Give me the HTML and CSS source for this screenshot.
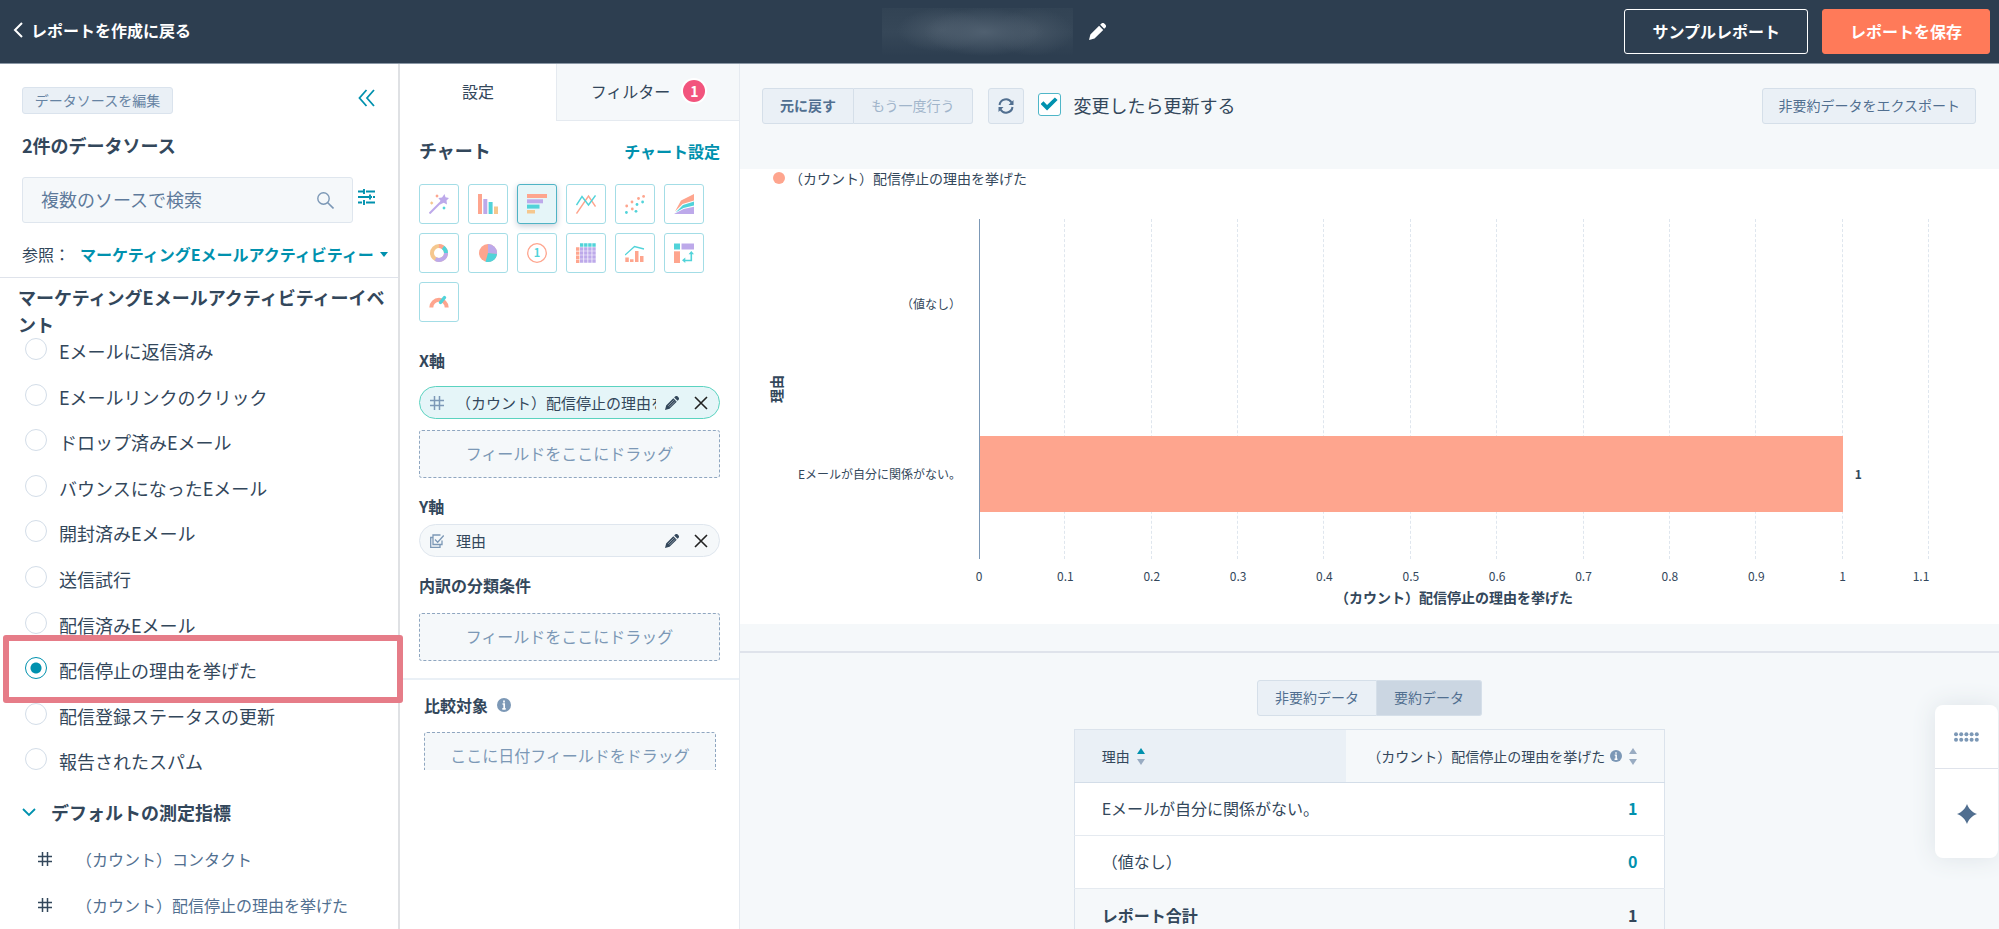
FILE: index.html
```html
<!DOCTYPE html>
<html lang="ja">
<head>
	<meta charset="UTF-8">
	<title>レポートビルダー</title>
	<link rel="stylesheet" href="styles.css">
</head>
<body>
	<svg class="defs" aria-hidden="true">
		<symbol id="pencil" viewBox="0 0 16 16">
			<path d="M0 16l1.300-5.200L9.500 2.600l3.900 3.900-8.200 8.200zM10.500 1.700l1-1a2.200 2.200 0 0 1 3.100 0l.7.700a2.200 2.200 0 0 1 0 3.100l-1 1z" fill="currentColor"/>
			<path d="M3.500 11.300l6.500-6.500M5 12.700l6.500-6.500" class="groove"/>
		</symbol>
		<symbol id="close" viewBox="0 0 14 14">
			<path d="M1 1l12 12M13 1L1 13" fill="none" stroke="#222" stroke-width="1.600"/>
		</symbol>
		<symbol id="hash" viewBox="0 0 14 14">
			<path d="M4.500 0v14M9.500 0v14M0 4.500h14M0 9.500h14" fill="none" stroke="currentColor" stroke-width="1.500"/>
		</symbol>
		<symbol id="info" viewBox="0 0 14 14">
			<circle cx="7" cy="7" r="7" fill="#7c98b6"/>
			<path d="M7 2.500v2M5.500 6h1.700v4.500M5.300 10.800h3.400" fill="none" stroke="#fff" stroke-width="1.700"/>
		</symbol>
	</svg>

	<header class="header">
		<a href="#" class="back">
			<svg width="10" height="16" viewBox="0 0 10 16"><path d="M9 1L2 8l7 7" fill="none" stroke="#fff" stroke-width="2"/></svg>
			レポートを作成に戻る
		</a>
		<div class="title">
			<span class="title-name"></span>
			<button class="icon-btn" aria-label="名前を編集"><svg class="title-pencil"><use href="#pencil"/></svg></button>
		</div>
		<div class="actions">
			<button class="btn-top">サンプルレポート</button>
			<button class="btn-top save">レポートを保存</button>
		</div>
	</header>

	<div class="app">
		<aside class="sidebar">
			<div class="source">
				<div class="source-top">
					<button class="btn-edit">データソースを編集</button>
					<button class="icon-btn" aria-label="閉じる">
						<svg width="17" height="20" viewBox="0 0 17 20"><path d="M8.500 3L1.500 11l7 8M16 3L9 11l7 8" fill="none" stroke="#0091ae" stroke-width="1.800"/></svg>
					</button>
				</div>
				<h2>2件のデータソース</h2>
				<div class="search-row">
					<div class="search">
						<input type="text" placeholder="複数のソースで検索" aria-label="検索">
						<svg width="17" height="17" viewBox="0 0 17 17"><circle cx="6.500" cy="6.500" r="5.700" fill="none" stroke="#7c98b6" stroke-width="1.400"/><path d="M10.500 10.500l6 6" stroke="#7c98b6" stroke-width="1.600"/></svg>
					</div>
					<button class="icon-btn" aria-label="絞り込み">
						<svg width="17" height="16" viewBox="0 0 17 16"><path d="M0 2.500h6M8 2.500h9M0 8h11M13 8h1M15 8h2M0 13.500h4M8 13.500h9M6 0v5M12 5.500v5M6 11v5" fill="none" stroke="#0091ae" stroke-width="1.900"/></svg>
					</button>
				</div>
				<div class="browse">
					<label for="browse">参照：</label>
					<select id="browse"><option>マーケティングEメールアクティビティー</option></select>
					<span class="caret"></span>
				</div>
			</div>
			<h2 class="events-title">マーケティングEメールアクティビティーイベント</h2>
			<ul class="events">
				<li><input type="radio" name="event" id="e1"><label for="e1">Eメールに返信済み</label></li>
				<li><input type="radio" name="event" id="e2"><label for="e2">Eメールリンクのクリック</label></li>
				<li><input type="radio" name="event" id="e3"><label for="e3">ドロップ済みEメール</label></li>
				<li><input type="radio" name="event" id="e4"><label for="e4">バウンスになったEメール</label></li>
				<li><input type="radio" name="event" id="e5"><label for="e5">開封済みEメール</label></li>
				<li><input type="radio" name="event" id="e6"><label for="e6">送信試行</label></li>
				<li><input type="radio" name="event" id="e7"><label for="e7">配信済みEメール</label></li>
				<li class="marked"><input type="radio" name="event" id="e8" checked><label for="e8">配信停止の理由を挙げた</label></li>
				<li><input type="radio" name="event" id="e9"><label for="e9">配信登録ステータスの更新</label></li>
				<li><input type="radio" name="event" id="e10"><label for="e10">報告されたスパム</label></li>
			</ul>
			<h2 class="metrics-title">
				<svg width="14" height="9" viewBox="0 0 14 9"><path d="M1 1l6 6 6-6" fill="none" stroke="#0091ae" stroke-width="1.800"/></svg>
				デフォルトの測定指標
			</h2>
			<ul class="metrics">
				<li><svg class="i14"><use href="#hash"/></svg><span>（カウント）コンタクト</span></li>
				<li><svg class="i14"><use href="#hash"/></svg><span>（カウント）配信停止の理由を挙げた</span></li>
			</ul>
		</aside>

		<section class="config">
			<nav class="tabs">
				<button class="tab active">設定</button>
				<button class="tab">フィルター<span class="badge">1</span></button>
			</nav>
			<div class="config-body">
				<div class="inner">
					<div class="chart-head">
						<h2>チャート</h2>
						<a href="#">チャート設定</a>
					</div>
					<div class="types">
						<button aria-label="自動"><svg viewBox="0 0 20 20"><path d="M.5 19.500L13 7" stroke="#bda9ea" stroke-width="2"/><path d="M15.500 0l1 3.300L20 4l-2.500 2.500.5 4-3.300-1.700L11 10.500l.5-3.700L9.300 4l3.700-.5z" fill="#bda9ea"/><path d="M8 .3L9.700 2 8 3.700 6.300 2z" fill="#fea58e"/><path d="M2.700 7.300L4.400 9l-1.700 1.700L1 9z" fill="#f5c78e"/><path d="M15 12.300l1.700 1.700-1.700 1.700-1.700-1.700z" fill="#51d3d9"/></svg></button>
						<button aria-label="縦棒"><svg viewBox="0 0 20 20"><path d="M0 0h4v20H0z" fill="#fea58e"/><path d="M5.300 5h4v15h-4z" fill="#bda9ea"/><path d="M10.600 8h4v12h-4z" fill="#51d3d9"/><path d="M16 12.500h4V20h-4z" fill="#f5c78e"/></svg></button>
						<button aria-label="横棒" class="on"><svg viewBox="0 0 20 20"><path d="M0 0h20v4H0z" fill="#fea58e"/><path d="M0 5.300h16v4H0z" fill="#bda9ea"/><path d="M0 10.600h12.500v4H0z" fill="#51d3d9"/><path d="M0 16h8v3.500H0z" fill="#f5c78e"/></svg></button>
						<button aria-label="折れ線"><svg viewBox="0 0 20 20" fill="none" stroke-width="1.400"><path d="M.5 19.500l12-17.500 7 10.500" stroke="#fea58e"/><path d="M.5 11L6 2.500l6.500 8.500 7-9.500" stroke="#51d3d9"/></svg></button>
						<button aria-label="散布図"><svg viewBox="0 0 20 20"><g fill="#fea58e"><circle cx="1.700" cy="12" r="1.400"/><circle cx="7" cy="8" r="1.400"/><circle cx="7.300" cy="15" r="1.400"/><circle cx="13.500" cy="4.500" r="1.400"/><circle cx="18.600" cy="2.400" r="1.400"/></g><g fill="#51d3d9"><circle cx="1.400" cy="18.500" r="1.400"/><circle cx="11" cy="17.300" r="1.400"/><circle cx="12" cy="10.500" r="1.400"/><circle cx="17.600" cy="8" r="1.400"/></g></svg></button>
						<button aria-label="面"><svg viewBox="0 0 20 20"><path d="M1 17.500L7 6.500 20 0v6.500L8.500 10z" fill="#fea58e"/><path d="M1.500 18.500L9 11l11-3.500v4L9.500 14z" fill="#51d3d9"/><path d="M0 20L9.500 15 20 12.800V20z" fill="#bda9ea"/></svg></button>
						<button aria-label="ドーナツ"><svg viewBox="0 0 20 20" fill="none" stroke-width="4"><circle cx="10" cy="10" r="7" stroke="#f5c78e"/><path d="M10 3a7 7 0 0 1 4 1.300" stroke="#fea58e"/><path d="M14 4.300A7 7 0 0 1 17 10" stroke="#51d3d9"/><path d="M17 10a7 7 0 0 1-10.500 6" stroke="#bda9ea"/></svg></button>
						<button aria-label="円"><svg viewBox="0 0 20 20"><circle cx="10" cy="10" r="9" fill="#fea58e"/><path d="M10 10V1a9 9 0 0 1 9 10z" fill="#bda9ea"/><path d="M10 10l9 1a9 9 0 0 1-11.500 7.700z" fill="#51d3d9"/></svg></button>
						<button aria-label="数値"><svg viewBox="0 0 20 20"><circle cx="10" cy="10" r="9.300" fill="none" stroke="#fea58e" stroke-width="1.300"/><text x="10" y="14" text-anchor="middle" class="num">1</text></svg></button>
						<button aria-label="表"><svg viewBox="0 0 20 20" fill="none" stroke-width="3.400" stroke-dasharray="3.400 .7"><path d="M4 2h16" stroke="#51d3d9"/><path d="M4 6h16M4 10h16M4 14h16M4 18h16" stroke="#bda9ea"/><path d="M1.700 4.300V20" stroke="#fea58e"/></svg></button>
						<button aria-label="複合"><svg viewBox="0 0 20 20"><path d="M0 12l9.500-8.500L19 6" fill="none" stroke="#51d3d9" stroke-width="1.300"/><path d="M.3 14.500h3.500V19H.3zM5 16.300h3.500V19H5zM10 8h3.500v11H10zM15 13h3.500v6H15z" fill="#fea58e"/></svg></button>
						<button aria-label="ピボット"><svg viewBox="0 0 20 20"><path d="M0 .5h6v6H0z" fill="#51d3d9"/><path d="M7.500.5H20v6H7.500z" fill="#bda9ea"/><path d="M0 8.300h6V20H0z" fill="#fea58e"/><path d="M17.300 10v7.500H10" fill="none" stroke="#51d3d9" stroke-width="1.600"/><path d="M17.300 8l2.700 3.300h-5.400zM8 17.300l3.300-2.700V20z" fill="#51d3d9"/></svg></button>
						<button aria-label="ゲージ"><svg viewBox="0 0 20 20" fill="none" stroke-width="4"><path d="M2.300 15.500a7.700 7.700 0 0 1 15.400 0" stroke="#fea58e"/><path d="M11.500 10.500l4-5" stroke="#51d3d9" stroke-width="3.400" stroke-linecap="round"/></svg></button>
					</div>

					<h3 class="axis-x">X軸</h3>
					<div class="pill green">
						<svg class="i14"><use href="#hash"/></svg>
						<span>（カウント）配信停止の理由を挙げた</span>
						<button class="icon-btn" aria-label="編集"><svg class="i14"><use href="#pencil"/></svg></button>
						<button class="icon-btn" aria-label="削除"><svg class="i14"><use href="#close"/></svg></button>
					</div>
					<div class="drop">フィールドをここにドラッグ</div>

					<h3 class="axis-y">Y軸</h3>
					<div class="pill">
						<svg class="i14" viewBox="0 0 14 14" fill="none" stroke="currentColor" stroke-width="1.300"><path d="M10.500 1H3v9.500h9V6.500M2.500 3.500H.7v9.800H10v-2.500M5 5.500l2.700 2.700L13.700 1.500"/></svg>
						<span>理由</span>
						<button class="icon-btn" aria-label="編集"><svg class="i14"><use href="#pencil"/></svg></button>
						<button class="icon-btn" aria-label="削除"><svg class="i14"><use href="#close"/></svg></button>
					</div>

					<h3 class="breakdown">内訳の分類条件</h3>
					<div class="drop">フィールドをここにドラッグ</div>
				</div>
				<div class="compare">
					<h3>比較対象 <svg class="i14"><use href="#info"/></svg></h3>
					<div class="drop">ここに日付フィールドをドラッグ</div>
				</div>
			</div>
		</section>

		<main class="main">
			<div class="toolbar">
				<div class="group">
					<button class="btn undo">元に戻す</button>
					<button class="btn" disabled>もう一度行う</button>
				</div>
				<button class="btn refresh" aria-label="更新">
					<svg width="16" height="16" viewBox="0 0 16 16"><path d="M1.500 7A6.500 6.500 0 0 1 13.500 4.500M14.500 9A6.500 6.500 0 0 1 2.500 11.500" fill="none" stroke="#516f90" stroke-width="2"/><path d="M15.500 2v5h-5zM.5 14V9h5z" fill="#516f90"/></svg>
				</button>
				<input type="checkbox" id="auto" checked>
				<label for="auto">変更したら更新する</label>
				<button class="btn export">非要約データをエクスポート</button>
			</div>

			<div class="chart">
				<div class="legend"><i></i>（カウント）配信停止の理由を挙げた</div>
				<div class="ytitle">理由</div>
				<div class="ylabels">
					<span>（値なし）</span>
					<span>Eメールが自分に関係がない。</span>
				</div>
				<div class="grid"><i></i><i></i><i></i><i></i><i></i><i></i><i></i><i></i><i></i><i></i><i></i></div>
				<div class="bars">
					<div class="row"><div class="bar" style="width: 0%"></div></div>
					<div class="row"><div class="bar" style="width: 90.9%"></div><b>1</b></div>
				</div>
				<div class="xaxis">
					<div class="ticks">
						<span>0</span><span>0.1</span><span>0.2</span><span>0.3</span><span>0.4</span><span>0.5</span><span>0.6</span><span>0.7</span><span>0.8</span><span>0.9</span><span>1</span><span>1.1</span>
					</div>
					<div class="xtitle">（カウント）配信停止の理由を挙げた</div>
				</div>
			</div>

			<div class="data">
				<div class="group">
					<button class="btn">非要約データ</button>
					<button class="btn selected">要約データ</button>
				</div>
				<table>
					<thead>
						<tr>
							<th class="sorted"><div>理由<span class="sort asc"></span></div></th>
							<th><div>（カウント）配信停止の理由を挙げた<svg class="i12"><use href="#info"/></svg><span class="sort"></span></div></th>
						</tr>
					</thead>
					<tbody>
						<tr><td>Eメールが自分に関係がない。</td><td><a href="#">1</a></td></tr>
						<tr><td>（値なし）</td><td><a href="#">0</a></td></tr>
					</tbody>
					<tfoot>
						<tr><td>レポート合計</td><td>1</td></tr>
					</tfoot>
				</table>
			</div>
		</main>
	</div>

	<div class="float">
		<button aria-label="キーボード">
			<svg width="25" height="10" viewBox="0 0 25 10" fill="#7c98b6"><circle cx="2" cy="2.300" r="2"/><circle cx="7.200" cy="2.300" r="2"/><circle cx="12.400" cy="2.300" r="2"/><circle cx="17.600" cy="2.300" r="2"/><circle cx="22.800" cy="2.300" r="2"/><circle cx="2" cy="7.700" r="2"/><circle cx="7.200" cy="7.700" r="2"/><circle cx="12.400" cy="7.700" r="2"/><circle cx="17.600" cy="7.700" r="2"/><circle cx="22.800" cy="7.700" r="2"/></svg>
		</button>
		<button class="ai" aria-label="アシスタント">
			<svg width="20" height="20" viewBox="0 0 20 20"><path d="M10 0c1.500 4 4.500 8 10 10-5.500 2-8.500 6-10 10-1.500-4-4.500-8-10-10C5.500 8 8.500 4 10 0z" fill="#516f90"/></svg>
		</button>
	</div>
</body>
</html>
```
FILE: styles.css
```css
*, *::before, *::after{
	box-sizing: border-box;
}
body{
	margin: 0;
	height: 100vh;
	overflow: hidden;
	display: flex;
	flex-direction: column;
	font-family: "Noto Sans CJK JP", sans-serif;
	font-size: 16px;
	line-height: 24px;
	color: #33475b;
	background-color: #fff;
}
h2, h3, ul{
	margin: 0;
	padding: 0;
	list-style: none;
}
h2{
	font-size: 18px;
	line-height: 27px;
}
h3{
	font-size: 16px;
	line-height: 24px;
}
button, input, select{
	font-family: inherit;
	color: inherit;
}
button{
	padding: 0;
	cursor: pointer;
}
a{
	color: #0091ae;
	font-weight: bold;
	text-decoration: none;
}
.defs{
	position: absolute;
	width: 0;
	height: 0;
}
.groove{
	fill: none;
	stroke: #fff;
	stroke-width: 1;
	opacity: .5;
}
.icon-btn{
	border: 0;
	background: none;
	display: flex;
}
.i14{
	width: 14px;
	height: 14px;
	flex: none;
}
.i12{
	width: 12px;
	height: 12px;
	flex: none;
	margin-left: 5px;
}

/* header */
.header{
	height: 64px;
	flex: none;
	display: grid;
	grid-template-columns: 1fr auto 1fr;
	align-items: center;
	padding: 0 9px 0 13px;
	background-color: #2d3e50;
	border-bottom: 1px solid #8a97a5;
}
.back{
	display: flex;
	align-items: center;
	gap: 8px;
	padding-bottom: 4px;
	color: #fff;
}
.title{
	display: flex;
	align-items: center;
	gap: 16px;
	margin-right: 16px;
	color: #fff;
}
.title-name{
	width: 191px;
	height: 48px;
	background: radial-gradient(closest-side, #506070, transparent) 60% 50% / 120px 48px no-repeat,
		radial-gradient(closest-side, #485868, transparent) 15% 20% / 90px 44px no-repeat,
		radial-gradient(closest-side, #445464, transparent) 100% 50% / 80px 48px no-repeat,
		linear-gradient(#324354, #364758, #2d3e50);
}
.title-pencil{
	width: 17px;
	height: 17px;
}
.title-pencil .groove{
	stroke: #2d3e50;
}
.actions{
	display: flex;
	justify-content: flex-end;
	gap: 14px;
}
.btn-top{
	height: 45px;
	padding: 0 27px 2px;
	border: 1px solid #fff;
	border-radius: 3px;
	background: none;
	color: #fff;
	font-size: 16px;
	font-weight: bold;
}
.save{
	border-color: #ff7a59;
	background-color: #ff7a59;
}

.app{
	flex: 1;
	min-height: 0;
	display: flex;
}

/* data sources */
.sidebar{
	width: 400px;
	flex: none;
	position: relative;
	z-index: 1;
	border-right: 2px solid #dfe1e4;
}
.source{
	padding: 23px 10px 11px 22px;
	border-bottom: 1px solid #dfe3eb;
}
.source-top{
	display: flex;
	justify-content: space-between;
	align-items: flex-start;
	padding-right: 13px;
	margin-bottom: 18px;
}
.btn-edit{
	width: 151px;
	height: 27px;
	padding-bottom: 2px;
	border: 1px solid #dae3ed;
	border-radius: 3px;
	background-color: #eaf0f6;
	color: #6683a3;
	font-size: 14px;
	line-height: 20px;
}
.search-row{
	display: flex;
	align-items: center;
	gap: 5px;
	margin: 18px 0 19px;
}
.search-row .icon-btn{
	padding-bottom: 6px;
}
.search{
	width: 331px;
	height: 46px;
	display: flex;
	align-items: center;
	padding: 0 18px;
	border: 1px solid #dfe6ee;
	border-radius: 3px;
	background-color: #f5f8fa;
}
.search input{
	flex: 1;
	min-width: 0;
	padding: 0 0 2px;
	border: 0;
	outline: 0;
	background: none;
	font-size: 18px;
}
.search input::placeholder{
	color: #5e7a9b;
}
.browse{
	display: flex;
	align-items: center;
}
.browse select{
	appearance: none;
	border: 0;
	padding: 0;
	margin-left: 10px;
	background: none;
	color: #0091ae;
	font-size: 16px;
	font-weight: bold;
}
.caret{
	margin-left: 2px;
	border: 4px solid transparent;
	border-top: 5px solid #0091ae;
	border-bottom: 0;
}
.events-title{
	padding: 6px 6px 0 18px;
}
.events{
	min-height: 456px;
	display: grid;
	grid-auto-rows: 1fr;
	padding-left: 25px;
}
.events li{
	position: relative;
	display: flex;
	align-items: flex-start;
	gap: 12px;
	font-size: 18px;
	line-height: 26px;
}
.events input{
	appearance: none;
	width: 22px;
	height: 22px;
	margin: 0;
	border: 1px solid #d3dde8;
	border-radius: 50%;
	background-color: #fff;
}
.events input:checked{
	border-color: #0091ae;
	background: radial-gradient(circle, #0091ae 5px, #fff 6px);
}
.marked{
	z-index: 1;
}
.marked::after{
	content: "";
	position: absolute;
	top: -22px;
	left: -22px;
	width: 400px;
	height: 68px;
	border: 6px solid #e67c88;
	border-radius: 3px;
	pointer-events: none;
}
.metrics-title{
	display: flex;
	align-items: center;
	gap: 15px;
	padding: 5px 0 0 22px;
}
.metrics{
	display: grid;
	gap: 22px;
	padding: 21px 0 0 38px;
}
.metrics li{
	display: flex;
	align-items: center;
	gap: 24px;
}
.metrics span{
	color: #516f90;
}

/* chart settings */
.config{
	width: 340px;
	flex: none;
	border-right: 1px solid #e5eaf0;
}
.tabs{
	display: flex;
	height: 57px;
}
.tab{
	flex: 1;
	display: flex;
	align-items: center;
	justify-content: center;
	gap: 13px;
	padding-bottom: 2px;
	border: 1px solid #e5eaf0;
	border-width: 0 0 1px 1px;
	background-color: #f5f8fa;
	font-size: 16px;
}
.tab.active{
	flex: 0 0 156px;
	padding-bottom: 4px;
	border: 0;
	background: none;
}
.badge{
	width: 22px;
	height: 22px;
	border-radius: 50%;
	background-color: #f2547d;
	box-shadow: 0 0 0 2px #fff;
	color: #fff;
	font-size: 14px;
	line-height: 22px;
	font-weight: bold;
}
.config-body{
	height: calc(100% - 216px);
	overflow: hidden;
}
.inner{
	padding: 16px 19px 17px;
	border-bottom: 2px solid #eaf0f6;
}
.chart-head{
	display: flex;
	justify-content: space-between;
	align-items: center;
}
.types{
	display: flex;
	flex-wrap: wrap;
	gap: 9px;
	margin-top: 20px;
}
.types button{
	width: 40px;
	height: 40px;
	display: flex;
	align-items: center;
	justify-content: center;
	border: 1px solid #a3dde6;
	border-radius: 3px;
	background-color: #fff;
}
.types svg{
	width: 20px;
	height: 20px;
}
.types .on{
	border-color: #4fb3c5;
	background-color: #e5f5f8;
	box-shadow: 0 2px 6px #c5ced8;
}
.num{
	font-size: 11px;
	font-weight: bold;
	fill: #51d3d9;
}
.axis-x{
	margin: 26px 0 14px;
}
.axis-y{
	margin: 16px 0 6px;
}
.breakdown{
	margin: 16px 0 16px;
}
.pill{
	height: 33px;
	display: flex;
	align-items: center;
	padding: 0 11px 0 10px;
	border: 1px solid #dfe6ee;
	border-radius: 17px;
	background-color: #f5f8fa;
	font-size: 15px;
}
.pill > svg{
	color: #7c98b6;
}
.pill span{
	flex: 1;
	margin: 0 9px 0 12px;
	overflow: hidden;
	white-space: nowrap;
}
.pill .icon-btn + .icon-btn{
	margin-left: 15px;
}
.green{
	border-color: #5bd3c0;
	background-color: #e5f5f8;
}
.drop{
	height: 48px;
	border: 1px dashed #8fa6c0;
	border-radius: 3px;
	background-color: #f5f8fa;
	color: #7c98b6;
	line-height: 44px;
	text-align: center;
}
.pill + .drop{
	margin-top: 11px;
}
.compare{
	padding: 13px 23px 0 24px;
}
.compare h3{
	display: flex;
	align-items: center;
	gap: 9px;
	margin-bottom: 15px;
}

/* report */
.main{
	flex: 1;
	min-width: 0;
	background-color: #f5f8fa;
}
.toolbar{
	display: flex;
	align-items: center;
	padding: 24px 23px 45px 22px;
}
.group{
	display: flex;
}
.btn{
	height: 36px;
	padding: 0 17px 2px;
	border: 1px solid #d5dfe9;
	border-radius: 3px;
	background-color: #eaf0f6;
	color: #516f90;
	font-size: 14px;
}
.btn:disabled{
	color: #a1b5cb;
}
.undo{
	font-weight: bold;
}
.group .btn:first-child{
	border-radius: 3px 0 0 3px;
}
.group .btn:last-child{
	border-left: 0;
	border-radius: 0 3px 3px 0;
}
.refresh{
	width: 36px;
	margin: 0 14px 0 15px;
	padding: 0;
	display: flex;
	align-items: center;
	justify-content: center;
}
.toolbar input{
	appearance: none;
	width: 23px;
	height: 23px;
	margin: 0 13px 4px 0;
	border: 1px solid #4fb6c8;
	border-radius: 3px;
	background-color: #fff;
}
.toolbar input:checked::after{
	content: "";
	display: block;
	width: 17px;
	height: 15px;
	margin: 3px 2px;
	background-color: #0091ae;
	clip-path: polygon(0 50%, 17% 32%, 38% 56%, 84% 6%, 100% 24%, 38% 94%);
}
.toolbar label{
	padding-bottom: 3px;
	font-size: 18px;
}
.export{
	margin-left: auto;
	padding: 0 15px 2px;
}

.chart{
	display: grid;
	grid-template-columns: 18px 194px 1fr;
	grid-template-rows: 18px 340px auto;
	row-gap: 32px;
	padding: 0 70px 18px 27px;
	background-color: #fff;
	font-size: 14px;
	line-height: 18px;
}
.legend{
	grid-column: 1 / 4;
	display: flex;
	align-items: center;
	gap: 4px;
	padding-left: 6px;
}
.legend i{
	width: 12px;
	height: 12px;
	border-radius: 50%;
	background-color: #fea58e;
}
.ytitle, .ylabels, .grid, .bars{
	grid-row: 2;
}
.ytitle{
	writing-mode: vertical-rl;
	transform: rotate(180deg);
	text-orientation: sideways;
	text-align: center;
	font-weight: bold;
}
.ylabels{
	display: grid;
	grid-auto-rows: 1fr;
	align-items: center;
	padding-right: 18px;
	text-align: right;
	font-size: 12px;
}
.grid{
	grid-column: 3;
	display: grid;
	grid-template-columns: repeat(11, 1fr);
}
.grid i{
	border-right: 1px dashed #dfe6ee;
}
.bars{
	grid-column: 3;
	display: grid;
	grid-auto-rows: 1fr;
	border-left: 1px solid #7c98b6;
}
.row{
	display: flex;
	align-items: center;
	gap: 12px;
	font-size: 12px;
}
.bar{
	height: 76px;
	background-color: #fea58e;
}
.xaxis{
	grid-column: 3;
	margin-top: -24px;
	text-align: center;
}
.ticks{
	display: grid;
	grid-template-columns: repeat(12, 1fr);
	margin: 0 calc(100% / -22);
	font-size: 12px;
}
.ticks span:last-child{
	padding-right: 16px;
}
.xtitle{
	margin-top: 3px;
	font-weight: bold;
}

.data{
	display: flex;
	flex-direction: column;
	align-items: center;
	margin-top: 27px;
	padding-top: 27px;
	border-top: 2px solid #dfe3eb;
}
.data .btn{
	line-height: 20px;
}
.selected{
	background-color: #cbd6e2;
}
table{
	width: 47%;
	margin-top: 13px;
	border: 1px solid #dbe3ec;
	border-collapse: collapse;
	white-space: nowrap;
}
th{
	height: 53px;
	padding: 0 27px;
	font-size: 14px;
	font-weight: normal;
	border-bottom: 1px solid #d3dde8;
}
th:last-child{
	padding-left: 0;
}
th div{
	display: flex;
	align-items: center;
	justify-content: flex-end;
}
.sorted{
	width: 46%;
	background-color: #eaf0f6;
}
.sorted div{
	justify-content: flex-start;
}
.sort{
	display: flex;
	flex-direction: column;
	align-items: center;
	gap: 5px;
	margin-left: 7px;
}
.sort::before, .sort::after{
	content: "";
	border: 4px solid transparent;
}
.sort::before{
	border-top: 0;
	border-bottom: 6px solid #99acc2;
}
.sort::after{
	border-bottom: 0;
	border-top: 6px solid #99acc2;
}
.asc::before{
	border-bottom-color: #0091ae;
}
td{
	height: 53px;
	padding: 0 27px 3px;
	border-bottom: 1px solid #e5eaf0;
}
td:last-child{
	text-align: right;
	font-weight: bold;
}
tbody{
	background-color: #fff;
}
tfoot td{
	height: 56px;
	border-top: 1px solid #d3dde8;
	font-weight: bold;
}

/* floating tools */
.float{
	position: absolute;
	right: 1px;
	top: 705px;
	width: 63px;
	border-radius: 8px;
	overflow: hidden;
	background-color: #fff;
	box-shadow: 0 0 24px #dde3e8;
}
.float button{
	width: 100%;
	height: 64px;
	display: flex;
	align-items: center;
	justify-content: center;
	border: 0;
	border-bottom: 1px solid #dfe3eb;
	background: none;
}
.float .ai{
	height: 89px;
	border-bottom: 0;
}
```
